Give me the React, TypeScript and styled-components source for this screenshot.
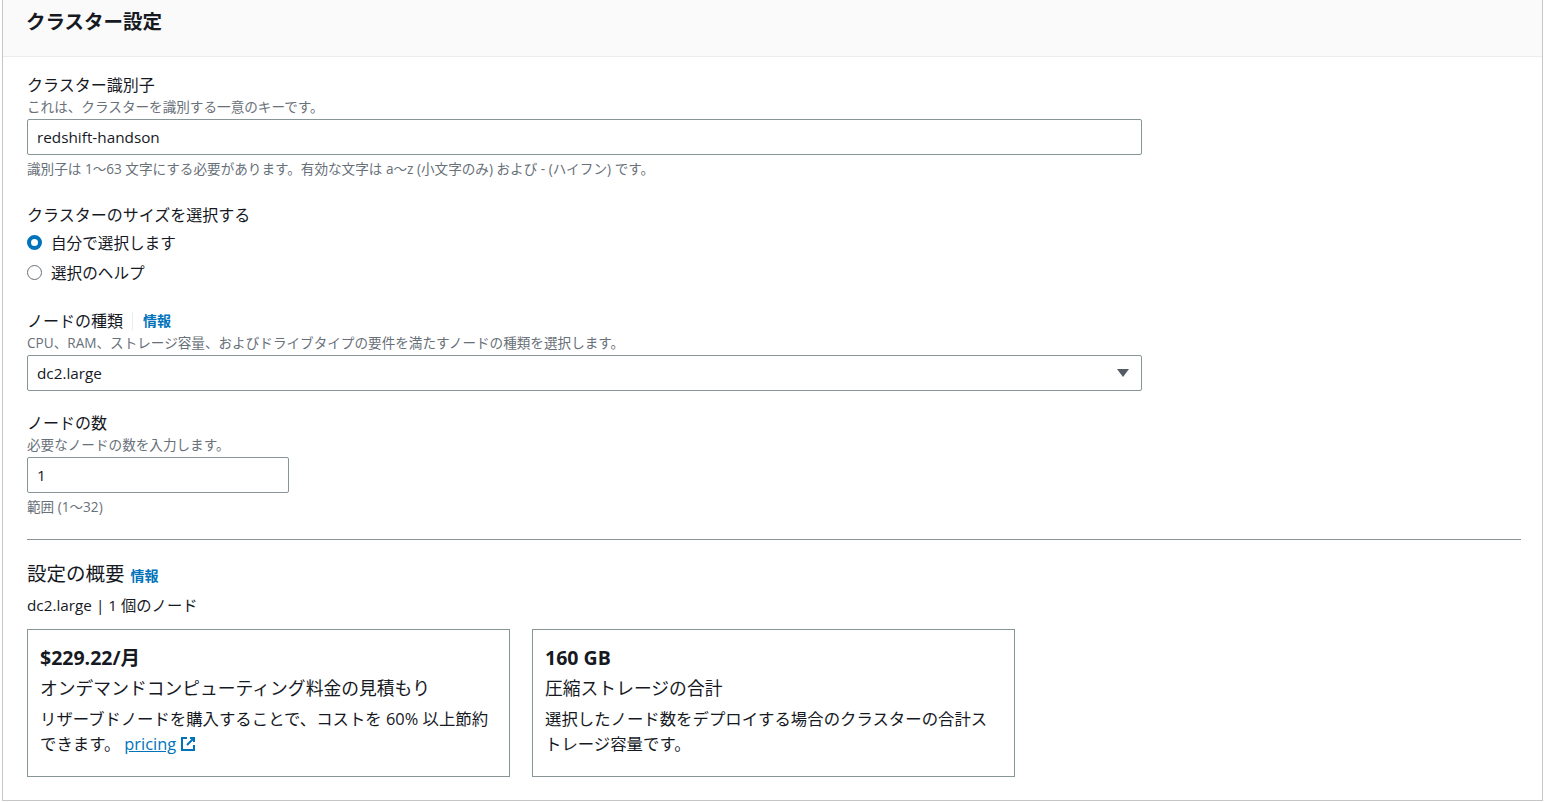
import React from "react";
import styled, { createGlobalStyle } from "styled-components";

const Global = createGlobalStyle`
  html, body { margin: 0; padding: 0; background: #fff; }
  body { font-family: "Open Sans", "Noto Sans CJK JP", sans-serif; color: #16191f; }
  * { box-sizing: border-box; }
`;

const Panel = styled.section`
  margin: 0 3px 0 2px;
  border: 1px solid #c6c6c6;
  border-top: none;
  height: 801px;
  background: #fff;
`;
const Header = styled.div`
  height: 57px;
  background: #fafafa;
  border-bottom: 1px solid #eaeded;
  padding: 7px 0 0 23px;
  font-size: 19.5px;
  font-weight: 700;
  line-height: 30px;
`;
const Body = styled.div`
  padding: 16px 21px 0 24px;
  display: flex;
  flex-direction: column;
`;
const Field = styled.div<{ mb: number }>`
  display: flex;
  flex-direction: column;
  margin-bottom: ${(p) => p.mb}px;
`;
const Label = styled.div`
  font-size: 16px;
  line-height: 24px;
  display: flex;
  align-items: center;
`;
const Desc = styled.div`
  font-size: 13.6px;
  line-height: 20px;
  color: #687078;
`;
const Hint = styled(Desc)`
  margin-top: 4px;
`;
const Input = styled.div<{ w: number }>`
  width: ${(p) => p.w}px;
  height: 36px;
  border: 1px solid #879596;
  border-radius: 2px;
  padding: 0 9px;
  display: flex;
  align-items: center;
  justify-content: space-between;
  font-size: 15.3px;
  margin-top: 2px;
`;
const Caret = styled.span`
  width: 0; height: 0;
  border-left: 6px solid transparent;
  border-right: 6px solid transparent;
  border-top: 8px solid #545b64;
  margin-right: 3px;
`;
const Info = styled.a`
  font-size: 14px;
  font-weight: 700;
  color: #0073bb;
  text-decoration: none;
`;
const Sep = styled.span`
  width: 1px; height: 18px; background: #eaeded; margin: 0 10px 0 9px;
`;
const RadioRow = styled.label`
  display: flex;
  align-items: center;
  gap: 9px;
  font-size: 15.6px;
  height: 30px;
`;
const Radio = styled.span<{ on?: boolean }>`
  width: 15px; height: 15px; border-radius: 50%;
  border: ${(p) => (p.on ? "4px solid #0073bb" : "1.5px solid #687078")};
  background: #fff;
`;
const Divider = styled.hr`
  border: none; border-top: 1px solid #879596; margin: 22px 0 20px; width: 1494px;
`;
const SumTitle = styled.div`
  font-size: 19.5px; line-height: 28px; display: flex; align-items: baseline; gap: 6px;
`;
const SumSub = styled.div`
  font-size: 15.3px; line-height: 22px; margin-top: 4px;
`;
const Cards = styled.div`
  display: flex; gap: 22px; margin-top: 13px;
`;
const Card = styled.div`
  width: 483px; height: 148px; border: 1px solid #879596;
  padding: 14px 12px 0 12px;
`;
const CardTitle = styled.div`
  font-size: 19.5px; font-weight: 700; line-height: 28px;
`;
const CardSub = styled.div`
  font-size: 17.8px; line-height: 26px; margin-top: 3px;
`;
const CardText = styled.div`
  font-size: 16.4px; line-height: 25px; margin-top: 5px;
`;
const Link = styled.a`
  color: #0073bb; text-decoration: underline; margin-left: 4px;
  display: inline-flex; align-items: center; gap: 4px;
`;

export default function App() {
  return (
    <>
      <Global />
      <Panel>
        <Header>クラスター設定</Header>
        <Body>
          <Field mb={24}>
            <Label>クラスター識別子</Label>
            <Desc>これは、クラスターを識別する一意のキーです。</Desc>
            <Input w={1115}>redshift-handson</Input>
            <Hint>識別子は 1～63 文字にする必要があります。有効な文字は a～z (小文字のみ) および - (ハイフン) です。</Hint>
          </Field>
          <Field mb={22}>
            <Label>クラスターのサイズを選択する</Label>
            <RadioRow><Radio on />自分で選択します</RadioRow>
            <RadioRow><Radio />選択のヘルプ</RadioRow>
          </Field>
          <Field mb={20}>
            <Label>ノードの種類<Sep /><Info>情報</Info></Label>
            <Desc>CPU、RAM、ストレージ容量、およびドライブタイプの要件を満たすノードの種類を選択します。</Desc>
            <Input w={1115}>dc2.large<Caret /></Input>
          </Field>
          <Field mb={0}>
            <Label>ノードの数</Label>
            <Desc>必要なノードの数を入力します。</Desc>
            <Input w={262}>1</Input>
            <Hint>範囲 (1～32)</Hint>
          </Field>
          <Divider />
          <SumTitle>設定の概要 <Info>情報</Info></SumTitle>
          <SumSub>dc2.large | 1 個のノード</SumSub>
          <Cards>
            <Card>
              <CardTitle>$229.22/月</CardTitle>
              <CardSub>オンデマンドコンピューティング料金の見積もり</CardSub>
              <CardText>
                リザーブドノードを購入することで、コストを 60% 以上節約できます。
                <Link>pricing
                  <svg width="16" height="16" viewBox="0 0 16 16" fill="none" stroke="#0073bb" strokeWidth="2">
                    <path d="M7 2H2v12h12V9" />
                    <path d="M10 2h4v4M14 2L7 9" />
                  </svg>
                </Link>
              </CardText>
            </Card>
            <Card>
              <CardTitle>160 GB</CardTitle>
              <CardSub>圧縮ストレージの合計</CardSub>
              <CardText>選択したノード数をデプロイする場合のクラスターの合計ストレージ容量です。</CardText>
            </Card>
          </Cards>
        </Body>
      </Panel>
    </>
  );
}
